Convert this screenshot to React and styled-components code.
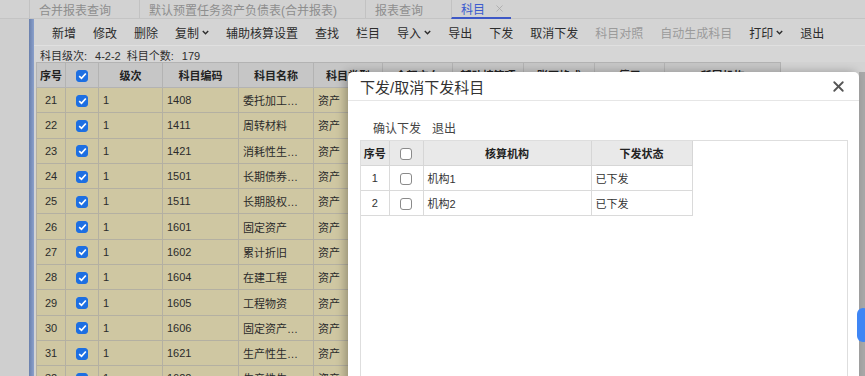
import styled, { createGlobalStyle } from "styled-components";
import { X } from "lucide-react";

const GlobalStyle = createGlobalStyle`
  body {
    margin: 0;
    overflow: hidden;
    font-family: "Liberation Sans", "Noto Sans CJK SC", sans-serif;
  }
`;

const tabs = [
  { label: "合并报表查询" },
  { label: "默认预置任务资产负债表(合并报表)" },
  { label: "报表查询" },
  { label: "科目", active: true },
];

const tools = [
  { label: "新增" },
  { label: "修改" },
  { label: "删除" },
  { label: "复制", menu: true },
  { label: "辅助核算设置" },
  { label: "查找" },
  { label: "栏目" },
  { label: "导入", menu: true },
  { label: "导出" },
  { label: "下发" },
  { label: "取消下发" },
  { label: "科目对照", disabled: true },
  { label: "自动生成科目", disabled: true },
  { label: "打印", menu: true },
  { label: "退出" },
];

const mainCols = [
  { title: "序号", w: 29 },
  { title: "check", w: 33 },
  { title: "级次", w: 64 },
  { title: "科目编码", w: 76 },
  { title: "科目名称", w: 75 },
  { title: "科目类型", w: 69 },
  { title: "余额方向", w: 70 },
  { title: "辅助核算项", w: 71 },
  { title: "账页格式", w: 71 },
  { title: "停用", w: 70 },
  { title: "所属机构", w: 116 },
];

const rows = [
  [21, "1408", "委托加工…"],
  [22, "1411", "周转材料"],
  [23, "1421", "消耗性生…"],
  [24, "1501", "长期债券…"],
  [25, "1511", "长期股权…"],
  [26, "1601", "固定资产"],
  [27, "1602", "累计折旧"],
  [28, "1604", "在建工程"],
  [29, "1605", "工程物资"],
  [30, "1606", "固定资产…"],
  [31, "1621", "生产性生…"],
  [32, "1622", "生产性生…"],
];

const orgs = [
  [1, "机构1", "已下发"],
  [2, "机构2", "已下发"],
];

const Page = styled.div`
  position: relative;
  width: 865px;
  height: 376px;
  overflow: hidden;
  background: #cdcdcd;
  display: flex;
  flex-direction: column;
`;

const TabBar = styled.div`
  height: 18px;
  display: flex;
  align-items: stretch;
  padding-left: 29px;
  background: #d2d2d2;
  border-bottom: 1px solid #c4c4c4;
  flex-shrink: 0;
`;

const Tab = styled.div`
  display: flex;
  align-items: center;
  gap: 9px;
  padding: 0 ${(p) => (p.$active ? "6px" : "28px")} 0 9px;
  border-left: 1px solid #c2c2c2;
  font-size: 12px;
  color: ${(p) => (p.$active ? "#3c5ccf" : "#8e8e8e")};
  border-bottom: ${(p) => (p.$active ? "2px solid #3e58c6" : "none")};
  margin-bottom: ${(p) => (p.$active ? "-1px" : "0")};
  white-space: nowrap;
`;

const TabClose = styled.span`
  color: #a5a5a5;
  display: flex;
`;

const Body = styled.div`
  flex: 1;
  display: flex;
  min-height: 0;
`;

const Gutter = styled.div`
  width: 29px;
  background: #cfcfcf;
  flex-shrink: 0;
`;

const BlueBar = styled.div`
  width: 5px;
  background: linear-gradient(to right, #6a80ad, #8aa0cb);
  flex-shrink: 0;
`;

const Content = styled.div`
  flex: 1;
  display: flex;
  flex-direction: column;
  background: #d3d3d3;
`;

const Toolbar = styled.div`
  flex-shrink: 0;
  height: 26px;
  display: flex;
  align-items: center;
  gap: 17px;
  padding-left: 18px;
  background: #d4d4d4;
  border-bottom: 1px solid #e0e0e0;
  box-shadow: 0 1px 0 #c6c6c6;
`;

const ToolItem = styled.span`
  display: flex;
  align-items: center;
  gap: 3px;
  font-size: 12px;
  color: ${(p) => (p.$disabled ? "#9b9b9b" : "#2c2c2c")};
  white-space: nowrap;
`;

const InfoLine = styled.div`
  flex-shrink: 0;
  height: 15px;
  display: flex;
  align-items: center;
  gap: 6px;
  padding-left: 6px;
  padding-top: 1px;
  font-size: 11px;
  color: #2e2e2e;
  background: #d6d6d6;
`;

const InfoValue = styled.span`
  margin-left: 8px;
`;

const MainTable = styled.table`
  flex-shrink: 0;
  margin-left: 2px;
  border-collapse: collapse;
  table-layout: fixed;
  width: 744px;
  font-size: 11px;
  color: #2b2b2b;
`;

const HeadCell = styled.th`
  height: 24px;
  padding: 0;
  background: #c6c6c6;
  border: 1px solid #b3b3b3;
  font-weight: bold;
  color: #222;
  text-align: center;
  white-space: nowrap;
  overflow: hidden;
`;

const Cell = styled.td`
  height: 24.3px;
  padding: 0 0 0 ${(p) => (p.$center ? "0" : "4px")};
  background: #cfc7a2;
  border: 1px solid #b4b0a2;
  text-align: ${(p) => (p.$center ? "center" : "left")};
  white-space: nowrap;
  overflow: hidden;
`;

const Check = styled.span`
  display: inline-flex;
  align-items: center;
  justify-content: center;
  width: 12px;
  height: 12px;
  border-radius: 3px;
  vertical-align: middle;
  background: ${(p) => (p.$on ? "#1d6fe2" : "#fff")};
  border: 1px solid ${(p) => (p.$on ? "#1d6fe2" : "#8a8a8a")};
  box-sizing: border-box;
`;

const Modal = styled.div`
  position: absolute;
  left: 348px;
  top: 72px;
  width: 511px;
  height: 330px;
  background: #fff;
  border-radius: 5px 5px 0 0;
  box-shadow: -3px 0 10px rgba(0, 0, 0, 0.28);
  display: flex;
  flex-direction: column;
`;

const ModalHead = styled.div`
  height: 28px;
  display: flex;
  align-items: center;
  justify-content: space-between;
  padding: 0 12px 0 12px;
  border-bottom: 1px solid #e6e6e6;
`;

const ModalTitle = styled.span`
  font-size: 15px;
  color: #333;
`;

const ModalBody = styled.div`
  flex: 1;
  display: flex;
  flex-direction: column;
  padding: 17px 11px 0 12px;
`;

const ActionRow = styled.div`
  display: flex;
  gap: 11px;
  padding-left: 13px;
  height: 18px;
  align-items: center;
  font-size: 12px;
  color: #444;
  margin-bottom: 4px;
`;

const Panel = styled.div`
  flex: 1;
  border: 1px solid #dedede;
  border-bottom: none;
`;

const OrgTable = styled.table`
  border-collapse: collapse;
  table-layout: fixed;
  width: 331px;
  font-size: 11px;
  color: #333;
`;

const OrgHead = styled.th`
  height: 24px;
  padding: 0;
  background: #e9e9e9;
  border: 1px solid #d6d6d6;
  border-top: none;
  font-weight: bold;
  color: #222;
  text-align: center;
`;

const OrgCell = styled.td`
  height: 24px;
  padding: 0 0 0 ${(p) => (p.$center ? "0" : "4px")};
  border: 1px solid #dadada;
  text-align: ${(p) => (p.$center ? "center" : "left")};
`;

const RightStrip = styled.div`
  position: absolute;
  right: 0;
  top: 72px;
  width: 6px;
  bottom: 0;
  background: #a9a9a9;
`;

const SideTab = styled.div`
  position: absolute;
  left: 857px;
  top: 308px;
  width: 12px;
  height: 34px;
  border-radius: 6px;
  background: #3f86f5;
`;

function Chevron() {
  return (
    <svg width="7" height="5" viewBox="0 0 7 5">
      <path d="M0.8 1 L3.5 3.8 L6.2 1" fill="none" stroke="currentColor" strokeWidth="1.4" />
    </svg>
  );
}

function Tick() {
  return (
    <svg width="9" height="8" viewBox="0 0 9 8">
      <path d="M1.2 4.2 L3.5 6.3 L7.8 1.5" fill="none" stroke="#fff" strokeWidth="1.7" />
    </svg>
  );
}

export default function App() {
  return (
    <>
      <GlobalStyle />
      <Page>
        <TabBar>
          {tabs.map((t) => (
            <Tab key={t.label} $active={t.active}>
              {t.label}
              {t.active && (
                <TabClose>
                  <X size={11} strokeWidth={1.6} />
                </TabClose>
              )}
            </Tab>
          ))}
        </TabBar>
        <Body>
          <Gutter />
          <BlueBar />
          <Content>
            <Toolbar>
              {tools.map((t) => (
                <ToolItem key={t.label} $disabled={t.disabled}>
                  {t.label}
                  {t.menu && <Chevron />}
                </ToolItem>
              ))}
            </Toolbar>
            <InfoLine>
              <span>
                科目级次:<InfoValue>4-2-2</InfoValue>
              </span>
              <span>
                科目个数:<InfoValue>179</InfoValue>
              </span>
            </InfoLine>
            <MainTable>
              <colgroup>
                {mainCols.map((c) => (
                  <col key={c.title} style={{ width: c.w }} />
                ))}
              </colgroup>
              <thead>
                <tr>
                  {mainCols.map((c) => (
                    <HeadCell key={c.title}>
                      {c.title === "check" ? (
                        <Check $on>
                          <Tick />
                        </Check>
                      ) : (
                        c.title
                      )}
                    </HeadCell>
                  ))}
                </tr>
              </thead>
              <tbody>
                {rows.map(([no, code, name]) => (
                  <tr key={no}>
                    <Cell $center>{no}</Cell>
                    <Cell $center>
                      <Check $on>
                        <Tick />
                      </Check>
                    </Cell>
                    <Cell>1</Cell>
                    <Cell>{code}</Cell>
                    <Cell>{name}</Cell>
                    <Cell>资产</Cell>
                    <Cell>借方</Cell>
                    <Cell />
                    <Cell>金额式</Cell>
                    <Cell />
                    <Cell />
                  </tr>
                ))}
              </tbody>
            </MainTable>
          </Content>
        </Body>
        <RightStrip />
        <Modal>
          <ModalHead>
            <ModalTitle>下发/取消下发科目</ModalTitle>
            <X size={17} strokeWidth={2.6} color="#555" />
          </ModalHead>
          <ModalBody>
            <ActionRow>
              <span>确认下发</span>
              <span>退出</span>
            </ActionRow>
            <Panel>
              <OrgTable>
                <colgroup>
                  <col style={{ width: 28 }} />
                  <col style={{ width: 34 }} />
                  <col style={{ width: 168 }} />
                  <col style={{ width: 101 }} />
                </colgroup>
                <thead>
                  <tr>
                    <OrgHead style={{ borderLeft: "none" }}>序号</OrgHead>
                    <OrgHead>
                      <Check />
                    </OrgHead>
                    <OrgHead>核算机构</OrgHead>
                    <OrgHead>下发状态</OrgHead>
                  </tr>
                </thead>
                <tbody>
                  {orgs.map(([no, org, state]) => (
                    <tr key={no}>
                      <OrgCell $center style={{ borderLeft: "none" }}>
                        {no}
                      </OrgCell>
                      <OrgCell $center>
                        <Check />
                      </OrgCell>
                      <OrgCell>{org}</OrgCell>
                      <OrgCell>{state}</OrgCell>
                    </tr>
                  ))}
                </tbody>
              </OrgTable>
            </Panel>
          </ModalBody>
        </Modal>
        <SideTab />
      </Page>
    </>
  );
}
